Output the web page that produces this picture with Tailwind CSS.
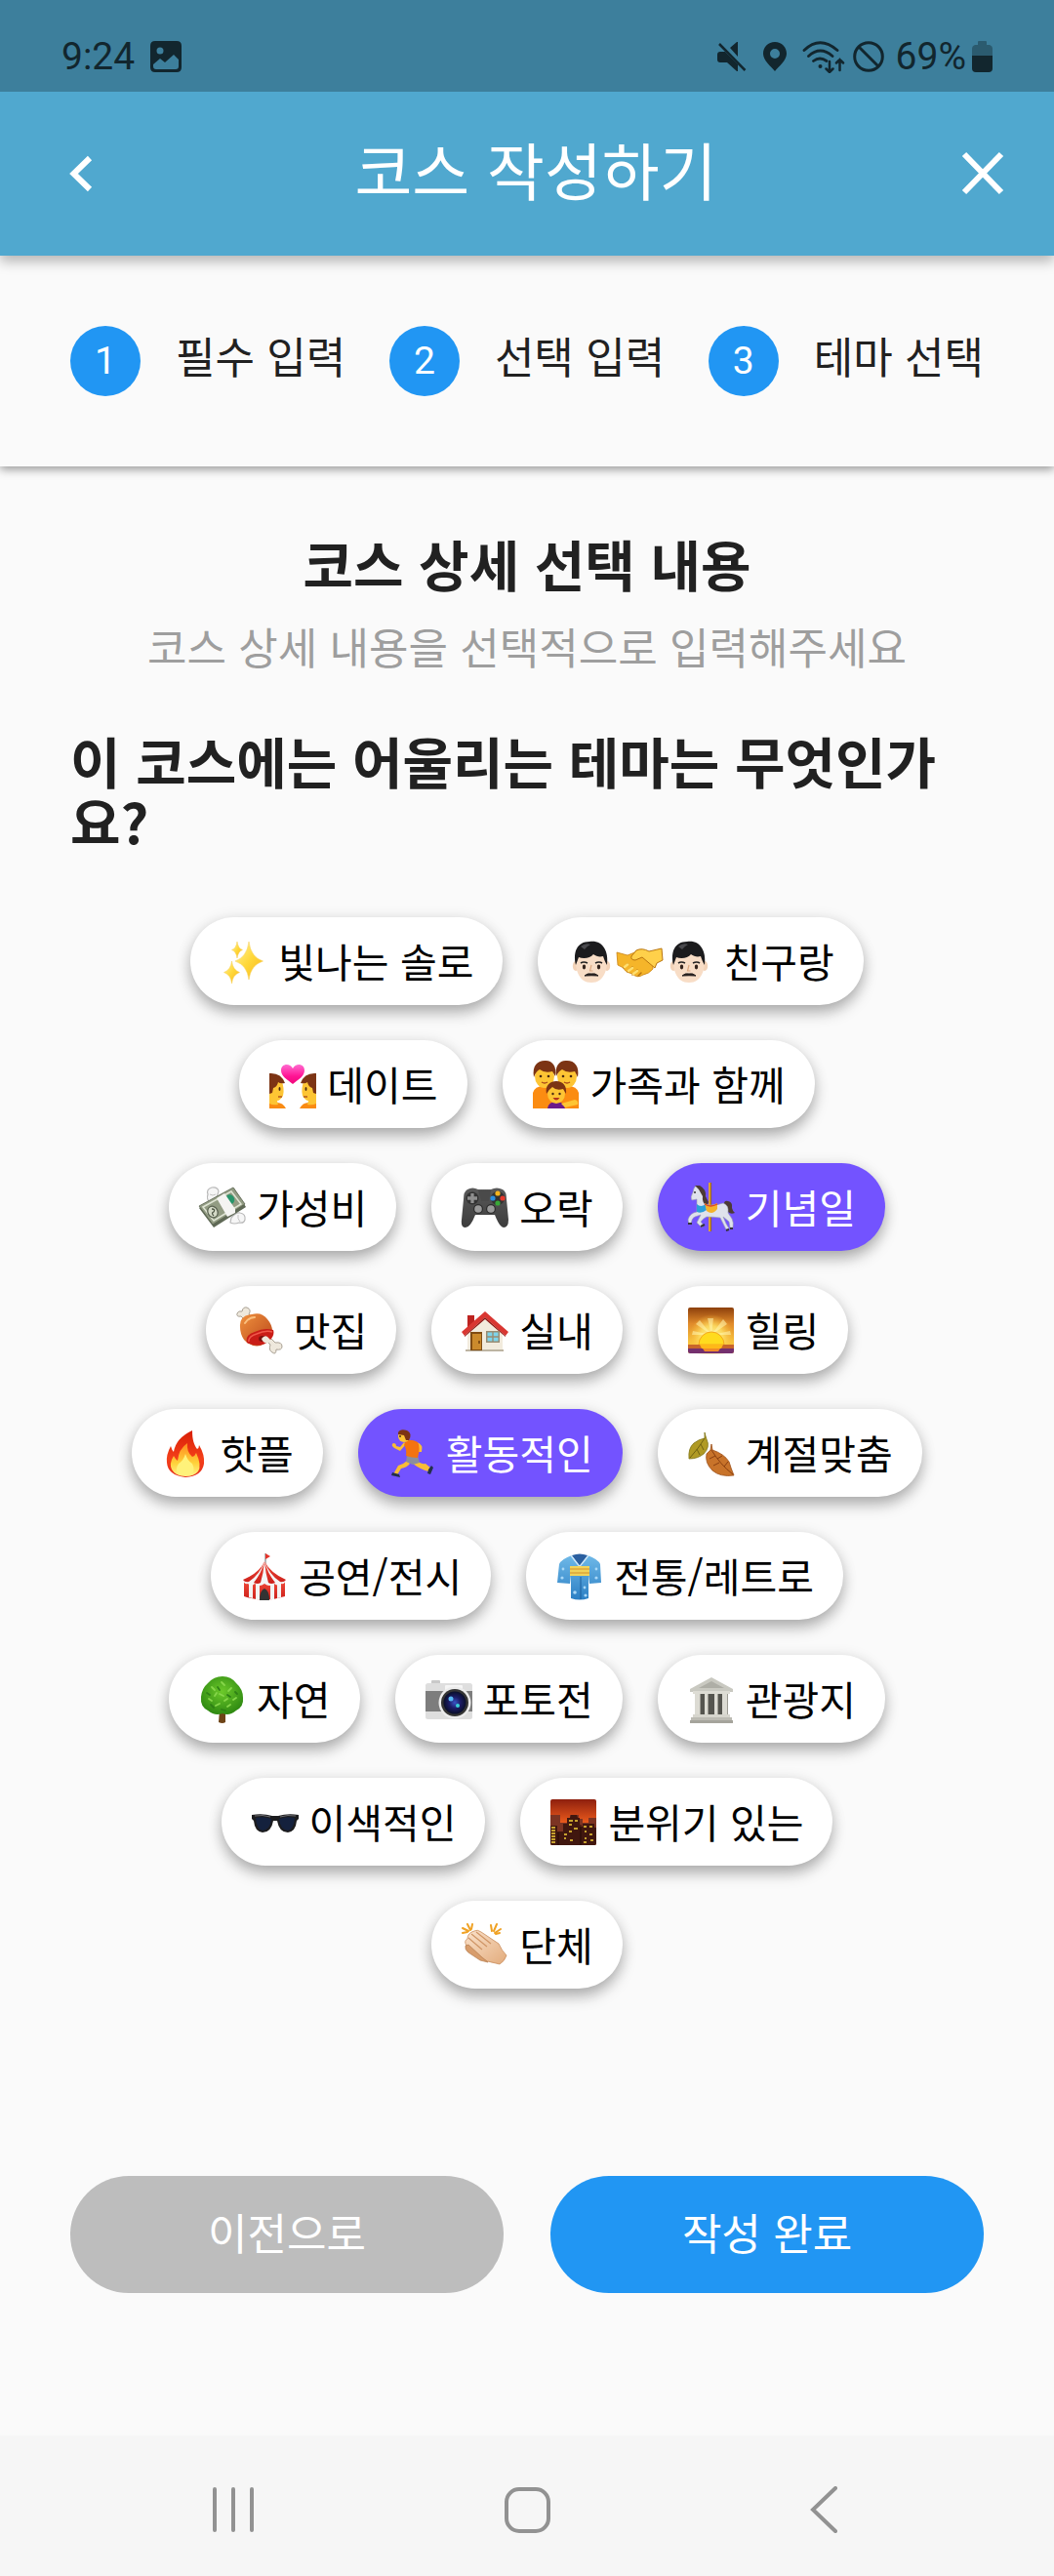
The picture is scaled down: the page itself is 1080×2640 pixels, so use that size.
<!DOCTYPE html>
<html lang="ko">
<head>
<meta charset="utf-8">
<meta name="viewport" content="width=device-width, initial-scale=1">
<title>코스 작성하기</title>
<script src="https://cdn.jsdelivr.net/npm/@tailwindcss/browser@4"></script>
</head>
<body class="flex min-h-screen flex-col bg-[#fafafa] font-['Noto_Sans_CJK_KR',sans-serif] text-[#212121]">

<!-- Shared symbols and gradients -->
<svg class="absolute size-0" aria-hidden="true">
  <defs>
    <linearGradient id="gold" x1="0" y1="0" x2="1" y2="1"><stop offset="0" stop-color="#fff3a0"/><stop offset=".5" stop-color="#ffd83a"/><stop offset="1" stop-color="#f7b51c"/></linearGradient>
    <linearGradient id="pink" x1="0" y1="0" x2="0" y2="1"><stop offset="0" stop-color="#ff6ad0"/><stop offset=".6" stop-color="#ff1493"/><stop offset="1" stop-color="#f0087c"/></linearGradient>
    <linearGradient id="flame" x1="0" y1="0" x2="0" y2="1"><stop offset="0" stop-color="#d81e06"/><stop offset=".6" stop-color="#f4401a"/><stop offset="1" stop-color="#e62c1a"/></linearGradient>
    <linearGradient id="flameIn" x1="0" y1="0" x2="0" y2="1"><stop offset="0" stop-color="#ff8a1e"/><stop offset=".6" stop-color="#ffd23a"/><stop offset="1" stop-color="#fff48a"/></linearGradient>
    <linearGradient id="dusk" x1="0" y1="0" x2="0" y2="1"><stop offset="0" stop-color="#8c3f0c"/><stop offset=".35" stop-color="#e08a2a"/><stop offset=".75" stop-color="#f7c13c"/></linearGradient>
    <radialGradient id="sunGlow"><stop offset="0" stop-color="#fff9b0"/><stop offset=".5" stop-color="#ffe66a" stop-opacity=".8"/><stop offset="1" stop-color="#ffc23a" stop-opacity="0"/></radialGradient>
    <linearGradient id="night" x1="0" y1="0" x2="0" y2="1"><stop offset="0" stop-color="#8e1f0e"/><stop offset=".5" stop-color="#e8591c"/><stop offset="1" stop-color="#f58a2a"/></linearGradient>
    <radialGradient id="leafy" cx=".5" cy=".4" r=".6"><stop offset="0" stop-color="#6cc92a"/><stop offset="1" stop-color="#2f8a12"/></radialGradient>
    <radialGradient id="lens"><stop offset="0" stop-color="#3a55c8"/><stop offset=".5" stop-color="#1c1c66"/><stop offset="1" stop-color="#0a0f2a"/></radialGradient>
    <linearGradient id="pad" x1="0" y1="0" x2="0" y2="1"><stop offset="0" stop-color="#5a5a5a"/><stop offset="1" stop-color="#3c3c3c"/></linearGradient>
    <linearGradient id="skin" x1="0" y1="0" x2="1" y2="1"><stop offset="0" stop-color="#fbe3cc"/><stop offset="1" stop-color="#e2ab7c"/></linearGradient>
    <linearGradient id="ham" x1="0" y1="0" x2="1" y2="1"><stop offset="0" stop-color="#f0913e"/><stop offset="1" stop-color="#b9481a"/></linearGradient>
    <linearGradient id="tentRed" x1="0" y1="0" x2="0" y2="1"><stop offset="0" stop-color="#f04a3a"/><stop offset="1" stop-color="#cc1f1a"/></linearGradient>
    <linearGradient id="robe" x1="0" y1="0" x2="0" y2="1"><stop offset="0" stop-color="#6fb9e8"/><stop offset="1" stop-color="#2b7fc4"/></linearGradient>
  </defs>
  <symbol id="man" viewBox="0 0 50 50">
    <ellipse cx="9" cy="30" rx="3.2" ry="5" fill="#f3d3b8"/><ellipse cx="41" cy="30" rx="3.2" ry="5" fill="#f3d3b8"/>
    <path d="M9 21C9 12 41 12 41 21C42 33 38 47 25 47S8 33 9 21Z" fill="#f8ddc6"/>
    <path d="M9 29C6 16 10 5 23 5C36 3 43 14 41 29C39 26 38 23 37 20C33 21 30 20 27 18C24 22 17 23 12 21C11 24 10 26 9 29Z" fill="#1b1b1d"/>
    <path d="M14 10Q19 6 24 8Q20 10 18 13Z" fill="#4a4a4e"/>
    <path d="M14 27Q17 25 21 27M29 27Q33 25 36 27" stroke="#222" stroke-width="1.6" fill="none"/>
    <ellipse cx="17.500" cy="31" rx="1.700" ry="2.400" fill="#33231c"/><ellipse cx="32.500" cy="31" rx="1.700" ry="2.400" fill="#33231c"/>
    <path d="M25 29L23.500 35H26.500" stroke="#dca982" stroke-width="1.200" fill="none"/>
    <path d="M18 40Q21 37 25 38Q29 37 32 40Q25 39.500 18 40Z" fill="#26201f" stroke="#26201f"/>
  </symbol>
</svg>

<header class="relative z-20 shadow-[0_6px_12px_rgba(0,0,0,0.28)]">
  <!-- Status bar -->
  <div class="flex h-[94px] items-center justify-between bg-[#3d7f9c] pt-[22px] pr-[63px] pl-[63px] font-[Roboto,sans-serif] text-[39px] leading-[44px] text-[#12262e]">
    <div class="flex items-center gap-4">
      <span>9:24</span>
      <svg class="size-8" viewBox="0 0 32 32" aria-label="사진">
        <path fill="currentColor" fill-rule="evenodd" d="M5 0H27Q32 0 32 5V27Q32 32 27 32H5Q0 32 0 27V5Q0 0 5 0ZM10 6.500A3.500 3.500 0 1 0 10 13.500A3.500 3.500 0 1 0 10 6.500ZM3 24V26Q3 29 6 29H26Q29 29 29 26V19L24 14L15 22L10 18Z"/>
      </svg>
    </div>
    <div class="flex items-center">
      <svg class="mr-4 h-8 w-[31px]" viewBox="0 0 31 32" aria-label="음소거">
        <path fill="currentColor" d="M0 14Q0 11 3 11H8L21 24V31H20L10 22H3Q0 22 0 19ZM13 7L20 1H21V16Z"/>
        <path stroke="currentColor" stroke-width="2.500" d="M2 3L28.500 30"/>
      </svg>
      <svg class="mr-4 h-8 w-6" viewBox="0 0 24 32" aria-label="위치">
        <path fill="currentColor" fill-rule="evenodd" d="M12 1C5 1 0 6 0 13C0 20 8 26 12 31C16 26 24 20 24 13C24 6 19 1 12 1ZM12 8A5 5 0 1 1 12 18A5 5 0 1 1 12 8Z"/>
      </svg>
      <svg class="mr-2 h-[34px] w-[44px]" viewBox="0 0 44 34" fill="none" stroke="currentColor" stroke-linecap="round" aria-label="와이파이">
        <path stroke-width="2.800" d="M2 10.500Q18 -5 36 10.500M6.500 16.500Q18.500 5.500 31 16.500M11.500 21.500Q18 16.500 25 21.500"/>
        <circle cx="18.500" cy="27" r="2" fill="currentColor" stroke="none"/>
        <path stroke-width="2.500" d="M28 22V33M24.500 29.500L28 33L31.500 29.500M38.500 31V20M35 23.500L38.500 20L42 23.500"/>
      </svg>
      <svg class="mr-3 size-8" viewBox="0 0 32 32" fill="none" stroke="currentColor" stroke-width="3" aria-label="차단">
        <circle cx="16" cy="16" r="14.300"/><path d="M6 6L26 26"/>
      </svg>
      <span class="mr-1.5">69%</span>
      <svg class="h-8 w-[21px]" viewBox="0 0 21 32" aria-label="배터리">
        <path fill="currentColor" fill-opacity=".4" d="M6 1Q6 0 7 0H14Q15 0 15 1V4H18Q21 5 21 8V15H0V8Q0 5 3 4H6Z"/>
        <path fill="currentColor" d="M0 15H21V28Q21 32 17 32H4Q0 32 0 28Z"/>
      </svg>
    </div>
  </div>
  <!-- App bar -->
  <div class="flex h-[168px] items-center justify-between bg-[#50a8cf] pr-9 pl-[54px] text-white">
    <button type="button" aria-label="뒤로" class="size-[72px]">
      <svg class="size-[72px]" viewBox="0 0 72 72" fill="none" stroke="currentColor" stroke-width="6"><path d="M38 20L21.500 36L38 52"/></svg>
    </button>
    <h1 class="pb-3 text-[64px] leading-[80px]">코스 작성하기</h1>
    <button type="button" aria-label="닫기" class="size-[72px]">
      <svg class="size-[72px]" viewBox="0 0 72 72" fill="none" stroke="currentColor" stroke-width="6"><path d="M16 16L54 55M54 16L16 55"/></svg>
    </button>
  </div>
</header>

<!-- Progress steps -->
<ol class="relative z-10 flex items-center justify-between bg-[#fafafa] p-[72px] text-[44px] leading-[60px] shadow-[0_3px_9px_rgba(0,0,0,0.4)]">
  <li class="flex items-center gap-9"><span class="size-[72px] rounded-full bg-[#2196f3] text-center font-[Roboto,sans-serif] text-[39px] leading-[72px] text-white">1</span><span class="pb-3">필수 입력</span></li>
  <li class="flex items-center gap-9"><span class="size-[72px] rounded-full bg-[#2196f3] text-center font-[Roboto,sans-serif] text-[39px] leading-[72px] text-white">2</span><span class="pb-3">선택 입력</span></li>
  <li class="flex items-center gap-9"><span class="size-[72px] rounded-full bg-[#2196f3] text-center font-[Roboto,sans-serif] text-[39px] leading-[72px] text-white">3</span><span class="pb-3">테마 선택</span></li>
</ol>

<main class="px-[72px] pt-[68px] pb-[144px]">
  <h2 class="text-center text-[56px] leading-[62px] font-bold">코스 상세 선택 내용</h2>
  <p class="mt-7 text-center text-[44px] leading-[52px] text-[#9e9e9e]">코스 상세 내용을 선택적으로 입력해주세요</p>
  <h3 class="mt-[60px] text-[56px] leading-[62px] font-bold">이 코스에는 어울리는 테마는 무엇인가요?</h3>

  <!-- Theme chips -->
  <div class="mt-[68px] flex flex-wrap justify-center gap-9 px-12 text-[41px] leading-[50px] text-black *:flex *:h-[90px] *:items-center *:gap-2.5 *:rounded-full *:bg-white *:px-[30px] *:whitespace-nowrap *:shadow-[0_9px_15px_-1px_rgba(0,0,0,0.26),0_2px_15px_rgba(0,0,0,0.12)] *:aria-pressed:bg-[#7353ff] *:aria-pressed:text-white">
    <button type="button" aria-pressed="false">
      <svg class="size-[50px]" viewBox="0 0 50 50" aria-hidden="true"><g fill="url(#gold)" stroke="#f6cf57" stroke-width=".5"><path d="M30 5Q32 21 44.500 25Q32 29 30 44Q28 29 16 25Q28 21 30 5Z"/><path d="M18 5Q19 12 23.500 13.500Q19 15 18 22Q17 15 12.500 13.500Q17 12 18 5Z"/><path d="M12.500 25Q13.500 34 20.500 36.500Q13.500 39 12.500 48Q11.500 39 4.500 36.500Q11.500 34 12.500 25Z"/></g></svg>
      <span class="pb-0.5">빛나는 솔로</span>
    </button>
    <button type="button" aria-pressed="false">
      <span class="flex">
        <svg class="size-[50px]" viewBox="0 0 50 50" aria-hidden="true"><use href="#man"/></svg>
        <svg class="size-[50px]" viewBox="0 0 50 50" aria-hidden="true">
          <path d="M1 16L12 19L22 15L38 24L38 33Q34 38 28 39Q22 43 17 38Q9 36 8 32L2 29Z" fill="#f5b52a" stroke="#c98212" stroke-width=".8"/>
          <path d="M47 12L34 15Q27 11 21 14L16 20Q15 24 20 24L27 21L40 32L42 27L48 24Z" fill="#ffd04a" stroke="#b9750f" stroke-width="1"/>
          <path d="M8 32L12 28M12 36L17 31M17 39L22 34M23 40L26 37" stroke="#b9750f" stroke-width="1.500" stroke-linecap="round"/>
          <path d="M9 31L12 28.500M13 35L17 32M18 38L22 35" stroke="#ffdf70" stroke-width="2.500" stroke-linecap="round"/>
        </svg>
        <svg class="size-[50px]" viewBox="0 0 50 50" aria-hidden="true"><use href="#man"/></svg>
      </span>
      <span class="pb-0.5">친구랑</span>
    </button>
    <button type="button" aria-pressed="false">
      <svg class="size-[50px]" viewBox="0 0 50 50" aria-hidden="true">
        <path d="M1 43Q6 42 9 44Q15 44 18 50H1Z" fill="#f98b14"/><path d="M49 43Q44 42 41 44Q35 44 32 50H49Z" fill="#f98b14"/>
        <path d="M1 20H13Q17 30 15 37Q12 42 9 42L10 46Q5 47 1 45Z" fill="#fdc534"/><path d="M49 20H37Q33 30 35 37Q38 42 41 42L40 46Q45 47 49 45Z" fill="#fdc534"/>
        <path d="M1 14Q13 13 17 24Q12 25 10 23Q9 28 5 29L4 34L1 35Z" fill="#7c3414"/><path d="M49 14Q37 13 33 24Q38 25 40 23Q41 28 45 29L46 34L49 35Z" fill="#7c3414"/>
        <ellipse cx="11.500" cy="30" rx="1" ry="2" fill="#4a2a12"/><ellipse cx="38.500" cy="30" rx="1" ry="2" fill="#4a2a12"/>
        <path d="M10 38H14M36 38H40" stroke="#b5571a" stroke-width="1.300"/>
        <path d="M25 25C19 20 13 17 13 11C13 4 22 3 25 9C28 3 37 4 37 11C37 17 31 20 25 25Z" fill="url(#pink)"/>
      </svg>
      <span class="pb-0.5">데이트</span>
    </button>
    <button type="button" aria-pressed="false">
      <svg class="size-[50px]" viewBox="0 0 50 50" aria-hidden="true">
        <path d="M1 50V34Q3 27 12 27Q20 27 22 33V50Z" fill="#fb8c12"/><path d="M27 50V33Q29 27 37 27Q46 27 48 34V50Z" fill="#fb8c12"/>
        <ellipse cx="13" cy="17" rx="10" ry="12" fill="#fdc534"/><ellipse cx="36" cy="17" rx="10" ry="12" fill="#fdc534"/>
        <path d="M2 18C0 6 6 1 13 1C20 0 26 6 24 17L21 12Q13 14 8 10Q4 12 2 18Z" fill="#7c3414"/><path d="M25 17C23 6 29 0 36 1C44 1 49 7 47 18L44 12Q36 14 31 10Q27 12 25 17Z" fill="#7c3414"/>
        <g fill="#4a2a12"><circle cx="9" cy="17" r="1.300"/><circle cx="17" cy="17" r="1.300"/><circle cx="32" cy="17" r="1.300"/><circle cx="40" cy="17" r="1.300"/></g>
        <path d="M10 23Q13 25 16 23M33 23Q36 25 39 23" stroke="#a8481a" stroke-width="1.400" fill="none"/>
        <path d="M16 50Q17 43 25 43Q33 43 34 50Z" fill="#6a1b8a"/><path d="M30 45L44 41Q48 42 47 46L34 49Z" fill="#fdc534"/>
        <ellipse cx="25" cy="35" rx="9" ry="10" fill="#fdc534"/>
        <path d="M15 35C13 26 19 22 25 22C32 22 36 27 35 35L32 30Q25 32 21 28Q18 30 15 35Z" fill="#7c3414"/>
        <circle cx="21.500" cy="35" r="1.200" fill="#4a2a12"/><circle cx="28.500" cy="35" r="1.200" fill="#4a2a12"/>
        <path d="M21.500 39Q25 44 28.500 39Z" fill="#b5341a"/>
      </svg>
      <span class="pb-0.5">가족과 함께</span>
    </button>
    <button type="button" aria-pressed="false">
      <svg class="size-[50px]" viewBox="0 0 50 50" aria-hidden="true">
        <path d="M13 22Q8 17 10 12Q8 7 14 5Q20 4 21 9L18 18ZM34 36Q39 30 43 31Q49 32 48 38Q47 42 42 41Q37 43 33 41Z" fill="#f6f6f6" stroke="#b9b9b9" stroke-width="1.200"/>
        <path d="M12 12Q15 14 18 12M41 33Q40 37 43 40" stroke="#c4c4c4" fill="none"/>
        <path d="M1 26L37 6L49 25L16 46Z" fill="#5f6956"/><path d="M1 24L36 5L48 22L15 43Z" fill="#929c83" stroke="#5a634f" stroke-width=".8"/>
        <path d="M5 25L34 9L44 22L16 39Z" fill="none" stroke="#dfe4d4" stroke-width="1.500"/>
        <ellipse cx="33" cy="17" rx="4" ry="5" fill="#28956a" transform="rotate(-28 33 17)"/>
        <ellipse cx="15" cy="30" rx="5" ry="6" fill="#d5dbc8" stroke="#5d6553" stroke-width="1.300" transform="rotate(-28 15 30)"/>
        <path d="M14 27Q18 27 16 30Q13 31 16 34" stroke="#4d5544" stroke-width="1.300" fill="none"/>
        <path d="M19 16L27 11L38 27L38 31L30 35Z" fill="#f4f4f2"/>
      </svg>
      <span class="pb-0.5">가성비</span>
    </button>
    <button type="button" aria-pressed="false">
      <svg class="size-[50px]" viewBox="0 0 50 50" aria-hidden="true">
        <path d="M7 7Q12 4 18 7H31Q37 4 43 7Q47 9 47 17L49 38Q49 46 44 46Q40 46 35 33H15Q10 46 5 46Q0 46 1 38L3 17Q3 9 7 7Z" fill="url(#pad)"/>
        <path d="M18 8H31L29 19H21Z" fill="#4a4a4a"/>
        <circle cx="12" cy="16" r="6.500" fill="#333"/><path d="M12 11V21M7 16H17" stroke="#8f8f8f" stroke-width="3.300"/>
        <circle cx="38" cy="16" r="7" fill="#333"/>
        <circle cx="38" cy="11" r="2.600" fill="#f4b41e"/><circle cx="43" cy="16" r="2.600" fill="#e8372a"/><circle cx="33" cy="16" r="2.600" fill="#2a8fe0"/><circle cx="38" cy="21" r="2.600" fill="#38a838"/>
        <circle cx="18" cy="27" r="5" fill="#2d2d2d"/><circle cx="18" cy="27" r="3.800" fill="#9a9a9a"/><circle cx="31" cy="27" r="5" fill="#2d2d2d"/><circle cx="31" cy="27" r="3.800" fill="#9a9a9a"/>
      </svg>
      <span class="pb-0.5">오락</span>
    </button>
    <button type="button" aria-pressed="true">
      <svg class="size-[50px]" viewBox="0 0 50 50" aria-hidden="true">
        <path d="M22 0H25V50H22Z" fill="#dc9f36"/><path d="M24 0H25V50H24Z" fill="#9a6418"/>
        <path d="M38 24Q37 18 42 19Q47 20 46 26Q47 30 49 31Q45 33 42 30Z" fill="#4c3a36"/>
        <path d="M7 6L9 3L14 7Q20 13 20 23Q30 24 37 21Q43 23 42 31L46 37Q48 41 47 46L44 46L43 40L37 35L40 42L43 47L40 48L34 36Q27 35 20 35Q16 37 14 40L17 44L15 46L10 41L14 33L8 35Q5 36 4 42L2 43L1 38Q3 31 10 30L10 17L5 18Q3 15 6 10Z" fill="#dfe2ec" stroke="#9a9fae" stroke-width=".6"/>
        <path d="M8 3L13 3Q20 7 19 14L22 20L20 24Q15 20 16 14L12 7Z" fill="#4c3a36"/>
        <path d="M10 22Q14 26 19 22L20 28Q15 32 10 30Z" fill="#2b9fd8"/>
        <path d="M18 21Q24 25 31 21L31 27Q26 34 20 29Z" fill="#f4b22a"/><path d="M18 22Q24 26 31 22" stroke="#d9442c" stroke-width="1.300" fill="none"/>
        <circle cx="8" cy="10" r="1" fill="#333"/><path d="M14 45L18 43M1 42L5 42M44 47L47 47M40 49L43 48" stroke="#35323c" stroke-width="2"/>
      </svg>
      <span class="pb-0.5">기념일</span>
    </button>
    <button type="button" aria-pressed="false">
      <svg class="size-[50px]" viewBox="0 0 50 50" aria-hidden="true">
        <path d="M10 15L6 11Q1 12 2 8Q3 5 7 6Q8 1 12 2Q17 4 14 9L18 14ZM31 35L36 40Q34 46 38 48Q42 51 42 45Q48 46 48 42Q48 37 41 38L35 32Z" fill="#eee8dc" stroke="#a9a194" stroke-width="1"/>
        <path d="M5 22Q4 10 17 9Q27 6 33 14Q39 21 38 29Q35 38 26 41Q16 43 9 35Q5 29 5 22Z" fill="url(#ham)"/>
        <path d="M12 38Q10 30 20 27Q30 22 39 25Q41 31 34 37Q24 44 12 38Z" fill="#c91d17"/>
        <path d="M14 37Q13 32 22 29Q31 25 38 27" stroke="#f0574a" stroke-width="1.500" fill="none"/>
        <ellipse cx="28" cy="34" rx="4" ry="3" fill="#7c120e"/>
        <path d="M27 34Q30 30 33 32L37 36L33 39Q28 38 27 34Z" fill="#eee8dc"/>
        <path d="M10 18Q14 12 20 12" stroke="#fbc07e" stroke-width="2" fill="none" stroke-linecap="round"/>
      </svg>
      <span class="pb-0.5">맛집</span>
    </button>
    <button type="button" aria-pressed="false">
      <svg class="size-[50px]" viewBox="0 0 50 50" aria-hidden="true">
        <path d="M7 10H14V24H7Z" fill="#bd2320"/>
        <path d="M7 27L25 9L43 27V47H7Z" fill="#f2ebdd"/><path d="M5 45H44V47H5Z" fill="#bdb4a2"/>
        <path d="M25 6L49 27L46 31L25 12L4 31L1 27Z" fill="#d93732"/><path d="M25 12L46 31L46 32L25 14L4 32V31Z" fill="#8f1714"/>
        <path d="M10 27H22V46H10Z" fill="#7f4c14"/><path d="M12 29H21V45H12Z" fill="#cb8a2c"/><path d="M19 36V39" stroke="#6b3c0e" stroke-width="1.500"/>
        <path d="M26 26H40V38H26Z" fill="#9a8c72"/><path d="M27.500 27.500H32.300V31.300H27.500ZM33.700 27.500H38.500V31.300H33.700ZM27.500 32.700H32.300V36.500H27.500ZM33.700 32.700H38.500V36.500H33.700Z" fill="#7ed4ea"/>
      </svg>
      <span class="pb-0.5">실내</span>
    </button>
    <button type="button" aria-pressed="false">
      <svg class="size-[50px]" viewBox="0 0 50 50" aria-hidden="true">
        <rect x="1" y="2" width="47" height="47" rx="2" fill="url(#dusk)"/>
        <circle cx="25" cy="32" r="23" fill="url(#sunGlow)"/>
        <path d="M25 30L21 13L27 13ZM25 30L9 19L13 15ZM25 30L37 14L41 19ZM25 30L5 30L6 26ZM25 30L44 26L45 30Z" fill="#fff6b0" fill-opacity=".55"/>
        <path d="M12 40A13 13 0 0 1 38 40Z" fill="#ffdb1e" stroke="#f5a81c"/>
        <path d="M1 40H48V44H1Z" fill="#c8652a"/><path d="M13 40H37L34 46H16Z" fill="#ffb818"/><path d="M1 44H48V47Q48 49 46 49H3Q1 49 1 47Z" fill="#74306e"/><path d="M16 44H34L32 47H18Z" fill="#f08a28"/>
      </svg>
      <span class="pb-0.5">힐링</span>
    </button>
    <button type="button" aria-pressed="false">
      <svg class="size-[50px]" viewBox="0 0 50 50" aria-hidden="true">
        <path d="M32 2C32 12 34 17 37 21Q39 20 39 17Q45 27 44 36Q42 49 25 50Q7 48 6 35Q5 27 10 18Q11 22 13 24Q15 10 32 2Z" fill="url(#flame)"/>
        <path d="M27 15Q26 24 32 29Q35 28 36 25Q42 38 38 44Q34 49 25 49Q15 49 11 42Q8 36 13 28Q15 32 17 33Q18 21 27 15Z" fill="url(#flameIn)"/>
        <path d="M25 26Q27 33 32 36Q36 44 30 48H19Q13 43 18 36Q23 33 25 26Z" fill="#fff27a"/>
      </svg>
      <span class="pb-0.5">핫플</span>
    </button>
    <button type="button" aria-pressed="true">
      <svg class="size-[50px]" viewBox="0 0 50 50" aria-hidden="true">
        <path d="M29 31Q33 37 39 36L45 41L42 44Q34 42 26 36ZM20 33L23 36Q20 40 14 41L9 49L6 47L11 38Q16 37 20 33Z" fill="#f9bd36"/>
        <path d="M42 42L45 38L47 40L44 47L41 46ZM5 45L12 47L13 50L4 48Z" fill="#23304a"/>
        <path d="M20 28L31 28L33 35L26 37L19 34Z" fill="#8b8f9c"/>
        <path d="M19 16L13 23L7 20Q3 17 6 15Q9 15 9 18L13 19L17 14ZM30 14Q37 16 35 24L31 24L32 20Z" fill="#f9bd36"/>
        <path d="M19 12Q26 11 31 14Q34 19 31 30Q25 30 19 28Q20 21 17 17Z" fill="#f4730f"/>
        <ellipse cx="17" cy="8" rx="6" ry="6" fill="#fdc534"/><path d="M11 4Q13 0 20 2Q26 5 22 12L19 12L17 7L11 6Z" fill="#7c3414"/>
        <circle cx="13" cy="8" r=".9" fill="#3a2412"/>
      </svg>
      <span class="pb-0.5">활동적인</span>
    </button>
    <button type="button" aria-pressed="false">
      <svg class="size-[50px]" viewBox="0 0 50 50" aria-hidden="true">
        <path d="M18 4Q19 8 20 11Q24 19 17 26Q11 31 2 31Q1 20 7 15Q12 11 18 10Z" fill="#b09a24" stroke="#7d7416" stroke-width=".8"/>
        <path d="M18 10Q12 20 3 30M14 16L17 22M10 21L13 27" stroke="#706312" stroke-width="1" fill="none"/>
        <path d="M25 16L26 22Q38 26 43 34Q45 41 48 48Q34 50 26 43Q18 35 20 26L24 22Z" fill="#c8732a" stroke="#9c4e17" stroke-width=".8"/>
        <path d="M25 22Q34 37 47 47M29 28L23 31M33 35L27 38M31 31L36 28M38 39L42 34" stroke="#8a3f10" stroke-width="1" fill="none"/>
      </svg>
      <span class="pb-0.5">계절맞춤</span>
    </button>
    <button type="button" aria-pressed="false">
      <svg class="size-[50px]" viewBox="0 0 50 50" aria-hidden="true">
        <path d="M26 2V13" stroke="#8f8f8f" stroke-width="1.300"/><path d="M26 2L31 5L26 8Z" fill="#e5332a"/>
        <path d="M4 30H46V46Q25 53 4 46Z" fill="url(#tentRed)"/>
        <path d="M9 32H13V48L9 47ZM16 32H20V49H16ZM31 32H35V49H31ZM38 32H42V47L38 48Z" fill="#f3f3f3"/>
        <path d="M25 10Q20 22 3 29Q4 34 8 33Q12 36 15 33Q20 37 25 33Q30 37 35 33Q39 36 42 33Q46 34 47 29Q31 22 25 10Z" fill="#f5f5f5"/>
        <path d="M25 10Q20 22 3 29Q5 32 9 31Q20 24 25 10ZM25 10Q22 22 14 32Q18 34 21 32Q24 22 25 10ZM25 10Q26 22 29 32Q32 34 36 32Q28 22 25 10ZM25 10Q30 24 41 31Q45 32 47 29Q31 22 25 10Z" fill="url(#tentRed)"/>
        <path d="M25 38Q30 40 30 50H20Q20 40 25 38Z" fill="#333"/>
      </svg>
      <span class="pb-0.5">공연/전시</span>
    </button>
    <button type="button" aria-pressed="false">
      <svg class="size-[50px]" viewBox="0 0 50 50" aria-hidden="true">
        <path d="M17 4L33 4Q44 8 46 13L47 32L35 33L34 24V48Q25 51 16 48V24L15 33L2 32L4 13Q6 8 17 4Z" fill="url(#robe)"/>
        <path d="M17 4Q25 1 33 4L26 16L24 16Z" fill="#2a5fa0"/><path d="M16 4L26 17M34 4L23 18" stroke="#cfe9fa" stroke-width="1.500"/>
        <path d="M15 15H35V25H15Z" fill="#f1d35a"/><path d="M15 18H35M15 22H35" stroke="#d48f2a" stroke-width="1.200"/>
        <path d="M26 26V49" stroke="#1c5e9c" stroke-width="1"/>
        <g fill="#a9d8f7"><circle cx="8" cy="18" r="1.400"/><circle cx="42" cy="18" r="1.400"/><circle cx="7" cy="27" r="1.600"/><circle cx="42" cy="27" r="1.600"/><circle cx="20" cy="42" r="1.800"/><circle cx="30" cy="37" r="1.400"/><circle cx="31" cy="45" r="1.600"/></g>
      </svg>
      <span class="pb-0.5">전통/레트로</span>
    </button>
    <button type="button" aria-pressed="false">
      <svg class="size-[50px]" viewBox="0 0 50 50" aria-hidden="true">
        <path d="M22 36H28V49Q25 51 21 49Z" fill="#6e4417"/>
        <path d="M25 2Q34 2 39 9Q46 15 46 24Q47 33 39 37Q32 43 25 40Q17 43 10 37Q2 33 3 23Q4 14 10 9Q16 2 25 2Z" fill="url(#leafy)"/>
        <path d="M14 13L17 16M24 8L27 11M34 14L31 17M11 25L14 27M22 20L26 22M36 26L39 24M18 32L22 30M30 33L33 31M27 27L30 25M17 22L19 19" stroke="#86d64a" stroke-width="1.800" stroke-linecap="round"/>
        <path d="M20 13L22 16M30 21L33 23M13 31L16 34M24 36L28 37M9 19L12 21M38 18L40 20" stroke="#2f8016" stroke-width="1.800" stroke-linecap="round"/>
      </svg>
      <span class="pb-0.5">자연</span>
    </button>
    <button type="button" aria-pressed="false">
      <svg class="size-[50px]" viewBox="0 0 50 50" aria-hidden="true">
        <rect x="7" y="6" width="9" height="5" rx="1" fill="#c9c9c9"/>
        <rect x="1" y="9" width="48" height="37" rx="2.500" fill="#dedede"/><path d="M1 17H49V38H1Z" fill="#7d7d7d"/>
        <rect x="21" y="11" width="18" height="6" rx="1" fill="#f5f5f5"/>
        <circle cx="31" cy="29" r="16.500" fill="#ececec"/><circle cx="31" cy="29" r="14" fill="#343434"/><circle cx="31" cy="29" r="11.500" fill="url(#lens)"/>
        <circle cx="27" cy="25" r="2.500" fill="#57b8f5"/><circle cx="34" cy="32" r="2" fill="#3ad0d8"/>
      </svg>
      <span class="pb-0.5">포토전</span>
    </button>
    <button type="button" aria-pressed="false">
      <svg class="size-[50px]" viewBox="0 0 50 50" aria-hidden="true">
        <path d="M8 19H42V42H8Z" fill="#55554f"/>
        <path d="M25 3L47 15V18H3V15Z" fill="#c9c9c1"/><path d="M25 7L38 14H12Z" fill="#aeaea6"/>
        <path d="M6 17H44V20H6Z" fill="#dddcd4"/>
        <path d="M8 20H14V42H8ZM18 20H22V42H18ZM28 20H32V42H28ZM36 20H42V42H36Z" fill="#dcdbd3"/><path d="M13 20H14V42H13ZM21 20H22V42H21ZM31 20H32V42H31ZM41 20H42V42H41Z" fill="#9d9c94"/>
        <path d="M6 41H44V44H6Z" fill="#d6d5cd"/><path d="M4 44H46V47H4Z" fill="#bcbbb3"/><path d="M3 47H47V50H3Z" fill="#a5a49c"/>
      </svg>
      <span class="pb-0.5">관광지</span>
    </button>
    <button type="button" aria-pressed="false">
      <svg class="size-[50px]" viewBox="0 0 50 50" aria-hidden="true">
        <path d="M1 18Q12 16 22 19H28Q38 16 49 18V22L47 24Q46 35 38 36Q29 36 27 24H23Q21 36 12 36Q4 35 3 24L1 22Z" fill="#1c1c1e"/>
        <path d="M5 21Q13 19 21 22Q20 33 12 34Q6 33 5 21ZM45 21Q37 19 29 22Q30 33 38 34Q44 33 45 21Z" fill="#14213d"/>
        <path d="M4 19Q12 17.500 20 20M30 20Q38 17.500 46 19" stroke="#6b6b70" stroke-width="1" fill="none"/>
      </svg>
      <span class="pb-0.5">이색적인</span>
    </button>
    <button type="button" aria-pressed="false">
      <svg class="size-[50px]" viewBox="0 0 50 50" aria-hidden="true">
        <rect x="1" y="2" width="47" height="47" rx="2" fill="url(#night)"/>
        <path d="M1 18H11V26H18V21H21V18H30V22H34V26H40V21H48V47Q48 49 46 49H3Q1 49 1 47Z" fill="#7c3423"/>
        <path d="M1 29H8V35H14V27H18V21H21L22 18H28L29 21H31V30H34V27H46V31H48V47Q48 49 46 49H3Q1 49 1 47Z" fill="#40170f"/>
        <path d="M2 31H6M2 34H6M2 37H6M2 40H6M2 43H6M2 46H6M20 24H24M26 24H29M20 28H23M25 32H29M15 38H18M20 35H23M15 42H17M21 44H24M35 30H38M41 30H44M36 35H38M41 38H44M36 42H38M42 44H45M35 46H38" stroke="#f2cf3a" stroke-width="1.500"/>
        <path d="M32 28V49M9 36V49" stroke="#220a06"/>
      </svg>
      <span class="pb-0.5">분위기 있는</span>
    </button>
    <button type="button" aria-pressed="false">
      <svg class="size-[50px]" viewBox="0 0 50 50" aria-hidden="true">
        <path d="M2 8L8 11M7 4L10 10M12 4L11 9M31 5L32 11M37 4L34 11M41 9L35 13M2 13L7 12M40 13L36 14" stroke="#f0a224" stroke-width="2" stroke-linecap="round"/>
        <path d="M14 11Q17 9 21 12L39 24Q42 31 47 36Q45 42 40 45L36 44Q27 43 20 38L6 26Q3 21 7 19Q7 13 14 11Z" fill="url(#skin)" stroke="#c98d5c" stroke-width=".8"/>
        <path d="M5 26Q4 30 8 33L20 41L28 43L22 38L8 25Z" fill="#d89d6c" stroke="#b57b4c" stroke-width=".7"/>
        <path d="M8 18L22 30M11 14L27 27M16 12L31 24" stroke="#cf9566" stroke-width="1.200" fill="none"/>
      </svg>
      <span class="pb-0.5">단체</span>
    </button>
  </div>

  <div class="mt-48 grid grid-cols-2 gap-12 text-[44px] leading-[52px] text-white">
    <button type="button" class="h-[120px] rounded-full bg-[#bdbdbd] pb-1.5">이전으로</button>
    <button type="button" class="h-[120px] rounded-full bg-[#2196f3] pb-1.5">작성 완료</button>
  </div>
</main>

<!-- System navigation -->
<nav class="mt-auto grid h-36 grid-cols-3 items-center justify-items-center bg-[#f6f6f6] px-[88px] pt-2 text-[#929292]" aria-label="시스템 탐색">
  <button type="button" aria-label="최근 앱"><svg class="block size-12" viewBox="0 0 48 48" stroke="currentColor" stroke-width="4" stroke-linecap="round"><path d="M5 3V45M24 3V45M43 3V45"/></svg></button>
  <button type="button" aria-label="홈"><svg class="block size-12" viewBox="0 0 48 48" fill="none" stroke="currentColor" stroke-width="4"><rect x="3" y="3" width="43" height="43" rx="13"/></svg></button>
  <button type="button" aria-label="이전"><svg class="block size-12" viewBox="0 0 48 48" fill="none" stroke="currentColor" stroke-width="4" stroke-linecap="round"><path d="M39 2L16 24L39 46"/></svg></button>
</nav>
</body>
</html>
